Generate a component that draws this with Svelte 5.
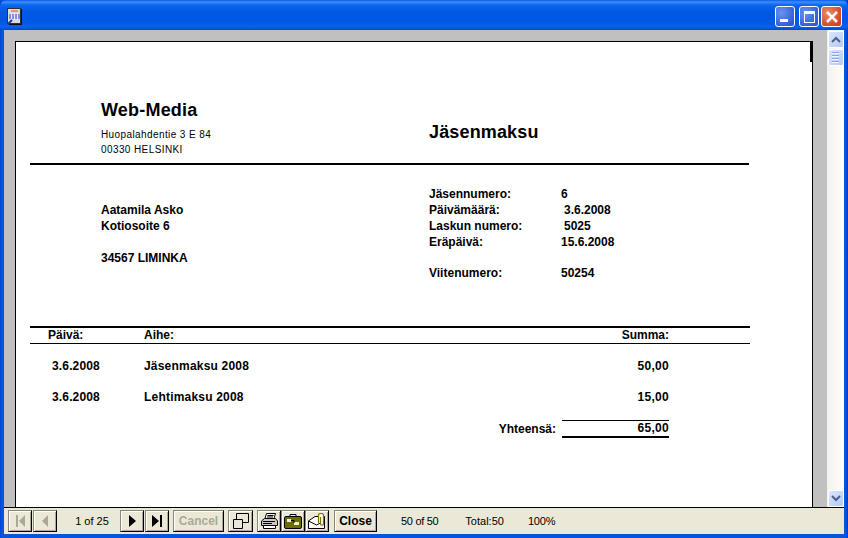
<script>
const rows = [
  { date: '3.6.2008', title: 'Jäsenmaksu 2008', sum: '50,00' },
  { date: '3.6.2008', title: 'Lehtimaksu 2008', sum: '15,00' }
]
const details = [
  ['Jäsennumero:', '6', false],
  ['Päivämäärä:', '3.6.2008', true],
  ['Laskun numero:', '5025', true],
  ['Eräpäivä:', '15.6.2008', false]
]
</script>

<div class="window">
  <div class="titlebar">
    <svg class="appicon" width="15" height="17" viewBox="0 0 15 17">
      <rect x="0.5" y="0.5" width="13" height="15" fill="#dcdcdc" stroke="#303030"/>
      <path d="M14.500 1v15.500H2" fill="none" stroke="#101010"/>
      <rect x="4" y="2" width="7" height="2" fill="#f08a8a"/>
      <path d="M2 6h11v5H2z" fill="#8a8ae8"/>
      <path d="M4.500 5v7M7.500 5v7M10.500 5v7" stroke="#e8e8ff"/>
      <path d="M1 16l4-4" stroke="#2030b0" stroke-width="2"/>
    </svg>
    <div class="controls">
      <div class="ctl minimize"><span class="min"></span></div>
      <div class="ctl"><span class="max"></span></div>
      <div class="ctl close">
        <svg width="14" height="14" viewBox="0 0 14 14"><path d="M2 2l10 10M12 2L2 12" stroke="#fff" stroke-width="2.6"/></svg>
      </div>
    </div>
  </div>

  <div class="client">
    <div class="viewer">
      <div class="canvas">
        <div class="page">
          <div class="corner"></div>
          <div class="report">
            <div class="head">
              <div class="company">
                <div class="brand">Web-Media</div>
                <div class="addr first">Huopalahdentie 3 E 84</div>
                <div class="addr">00330 HELSINKI</div>
              </div>
              <div class="doctitle">Jäsenmaksu</div>
            </div>
            <div class="thick"></div>

            <div class="info">
              <div class="customer">
                <div>Aatamila Asko</div>
                <div>Kotiosoite 6</div>
                <div class="city">34567 LIMINKA</div>
              </div>
              <div class="details">
                {#each details as [label, value, nudge]}
                  <div class="detail"><span>{label}</span><span class:nudge>{value}</span></div>
                {/each}
                <div class="detail ref"><span>Viitenumero:</span><span>50254</span></div>
              </div>
            </div>

            <div class="lines">
              <div class="tablehead">
                <span class="c-date">Päivä:</span>
                <span class="c-title">Aihe:</span>
                <span class="c-sum">Summa:</span>
              </div>
              {#each rows as row}
                <div class="row">
                  <span class="c-date in">{row.date}</span>
                  <span class="c-title">{row.title}</span>
                  <span class="c-sum">{row.sum}</span>
                </div>
              {/each}
              <div class="total">
                <span class="t-label">Yhteensä:</span>
                <span class="t-value">65,00</span>
              </div>
            </div>
          </div>
        </div>
      </div>
      <div class="scrollbar">
        <div class="sb-btn">
          <svg width="10" height="7" viewBox="0 0 10 7"><path d="M1 6l4-4 4 4" fill="none" stroke="#4d6185" stroke-width="2"/></svg>
        </div>
        <div class="sb-thumb"><i></i><i></i><i></i><i></i></div>
        <div class="sb-space"></div>
        <div class="sb-btn">
          <svg width="10" height="7" viewBox="0 0 10 7"><path d="M1 1l4 4 4-4" fill="none" stroke="#4d6185" stroke-width="2"/></svg>
        </div>
      </div>
    </div>

    <div class="toolbar">
      <div class="group">
        <button class="btn icon" aria-label="First">
          <svg width="14" height="14" viewBox="0 0 14 14"><path d="M3 1h2v12H3zM12 1v12L6 7z" fill="#aca899"/></svg>
        </button>
        <button class="btn icon" aria-label="Previous">
          <svg width="14" height="14" viewBox="0 0 14 14"><path d="M10 1v12L4 7z" fill="#aca899"/></svg>
        </button>
      </div>
      <span class="pageno">1 of 25</span>
      <div class="group">
        <button class="btn icon" aria-label="Next">
          <svg width="14" height="14" viewBox="0 0 14 14"><path d="M4 1v12l7-6z" fill="#000"/></svg>
        </button>
        <button class="btn icon" aria-label="Last">
          <svg width="14" height="14" viewBox="0 0 14 14"><path d="M2 1v12l7-6zM10 1h2v12h-2z" fill="#000"/></svg>
        </button>
      </div>
      <button class="btn text cancel">Cancel</button>
      <button class="btn icon tree" aria-label="Group tree">
        <svg width="16" height="16" viewBox="0 0 16 16"><path d="M3.500 .5h12v9H9.500M3.500 .5v6" fill="none" stroke="#000"/><path d="M.5 6.500h9v9h-9z" fill="none" stroke="#000"/></svg>
      </button>
      <div class="group print">
        <button class="btn icon" aria-label="Print">
          <svg width="17" height="16" viewBox="0 0 17 16">
            <path d="M5.500 .5h9l-1.500 5H4z" fill="#fff" stroke="#000"/>
            <path d="M3.500 5.500h11l2 2.500v4.500H.5V8z" fill="#c8c8c8" stroke="#000"/>
            <path d="M2.500 12.500h12v3h-12z" fill="#fff" stroke="#000"/>
            <path d="M6.500 2.500h6M6 4h6M2 8.500h12M2 10.500h9" stroke="#000"/>
            <path d="M12 10.500h3" stroke="#e8d820"/>
          </svg>
        </button>
        <button class="btn icon" aria-label="Export">
          <svg width="18" height="15" viewBox="0 0 18 15">
            <path d="M6 .5h6v3H6z" fill="none" stroke="#000"/>
            <rect x=".5" y="2.500" width="17" height="12" rx="1.500" fill="#6b6b00" stroke="#000"/>
            <path d="M3 5h4v3H3zM10 8h5v3h-5z" fill="#f0f0d0"/>
            <path d="M7 6.500h3V9" fill="none" stroke="#000"/>
          </svg>
        </button>
        <button class="btn icon" aria-label="Mail">
          <svg width="18" height="16" viewBox="0 0 18 16">
            <path d="M.5 8L7 3.500h9.500v12H.5z" fill="#fff" stroke="#000"/>
            <path d="M.5 8l8 4 8-4" fill="none" stroke="#000"/>
            <path d="M10.500 10V2c0-2 5-2 5 0v9c0 1.500-3 1.500-3 0V4" fill="#fff" stroke="#807000" stroke-width="1.200"/>
          </svg>
        </button>
      </div>
      <button class="btn text close-btn">Close</button>
      <div class="stats">
        <span class="s1">50 of 50</span>
        <span class="s2">Total:50</span>
        <span class="s3">100%</span>
      </div>
    </div>
  </div>
</div>

<style>
:global(body) {
  margin: 0;
  background: #0831d9;
}

.window {
  width: 848px;
  height: 538px;
  display: flex;
  flex-direction: column;
  overflow: hidden;
  font-family: "Liberation Sans", Arial, sans-serif;
  background: linear-gradient(90deg, #0046d5 0, #0855dd 2px, #0855dd 846px, #0831d9 100%);
}

.titlebar {
  height: 30px;
  flex: none;
  display: flex;
  align-items: center;
  justify-content: space-between;
  padding: 0 6px 0 7px;
  box-sizing: border-box;
  border-radius: 7px 7px 0 0;
  background: linear-gradient(180deg, #0a5be8 0, #3c8fff 2px, #0d66ee 5px, #0058e4 12px, #0257e6 22px, #0a62ec 27px, #0047cf 30px);
}

.appicon {
  margin-top: 2px;
}

.controls {
  display: flex;
  gap: 3px;
  margin-top: 3px;
}

.ctl {
  width: 20px;
  height: 21px;
  box-sizing: border-box;
  border: 1px solid #fff;
  border-radius: 3px;
  display: flex;
  align-items: center;
  justify-content: center;
  position: relative;
  background: radial-gradient(circle at 30% 30%, #6a93ee, #2a5bd8 80%);
}

.ctl.minimize {
  margin-right: 1px;
}

.ctl.close {
  width: 21px;
  margin-left: -1px;
  background: radial-gradient(circle at 30% 30%, #ea8a6c, #d2401c 80%);
}

.min {
  width: 8px;
  height: 3px;
  background: #fff;
  position: absolute;
  left: 4px;
  bottom: 4px;
}

.max {
  width: 9px;
  height: 8px;
  border: 1px solid #fff;
  border-top-width: 3px;
}

.client {
  flex: 1;
  margin: 0 4px 4px;
  min-height: 0;
  display: flex;
  flex-direction: column;
}

.viewer {
  flex: 1;
  min-height: 0;
  display: flex;
}

.canvas {
  flex: 1;
  background: #c0c0c0;
  padding: 11px 14px 0 11px;
  overflow: hidden;
}

.page {
  height: 100%;
  box-sizing: border-box;
  background: #fff;
  border: 1px solid #000;
  border-bottom: none;
  position: relative;
  padding-left: 14px;
  color: #000;
  font-size: 12px;
  font-weight: bold;
}

.corner {
  position: absolute;
  top: 0;
  right: -1px;
  width: 3px;
  height: 20px;
  background: #000;
}

.report {
  width: 719px;
}

.head {
  display: flex;
  padding: 58px 0 0 71px;
  height: 63px;
}

.company {
  width: 328px;
}

.brand {
  font-size: 18px;
  line-height: 20px;
  letter-spacing: 0.2px;
}

.addr {
  font-size: 10px;
  font-weight: normal;
  line-height: 15px;
  letter-spacing: 0.4px;
}

.addr.first {
  margin-top: 7px;
}

.doctitle {
  font-size: 18px;
  line-height: 20px;
  margin-top: 22px;
  letter-spacing: 0.15px;
}

.thick {
  height: 2px;
  background: #000;
}

.info {
  display: flex;
  padding-left: 71px;
  height: 161px;
}

.customer {
  width: 328px;
  padding-top: 37px;
  line-height: 16px;
}

.city {
  margin-top: 16px;
}

.details {
  padding-top: 21px;
  line-height: 16px;
}

.detail {
  display: grid;
  grid-template-columns: 132px auto;
}

.detail .nudge {
  padding-left: 3px;
}

.detail.ref {
  margin-top: 15px;
}

.lines {
  width: 720px;
}

.tablehead {
  display: flex;
  height: 15px;
  line-height: 15px;
  border-top: 2px solid #000;
  border-bottom: 1px solid #000;
  width: 720px;
}

.c-date {
  width: 114px;
  padding-left: 18px;
  box-sizing: border-box;
}

.c-date.in {
  padding-left: 22px;
  letter-spacing: 0.15px;
}

.c-title {
  width: 301px;
}

.c-sum {
  width: 224px;
  text-align: right;
}

.row {
  display: flex;
  height: 31px;
  line-height: 16px;
  padding-top: 14px;
  box-sizing: border-box;
}

.row .c-title {
  letter-spacing: 0.2px;
}

.row .c-sum {
  letter-spacing: 0.3px;
}

.total {
  display: flex;
  align-items: center;
  margin: 14px 0 0 60px;
}

.t-label {
  width: 472px;
  text-align: right;
  padding-right: 6px;
  box-sizing: border-box;
}

.t-value {
  width: 107px;
  height: 15px;
  line-height: 15px;
  text-align: right;
  letter-spacing: 0.3px;
  border-top: 1px solid #000;
  border-bottom: 2px solid #000;
}

.scrollbar {
  width: 17px;
  flex: none;
  display: flex;
  flex-direction: column;
  padding: 1px 0 0;
  box-sizing: border-box;
  background: linear-gradient(90deg, #f3f1ec, #fefefb);
}

.sb-btn, .sb-thumb {
  width: 14px;
  height: 15px;
  margin: 0 auto;
  border: 1px solid #fff;
  border-radius: 2px;
  display: flex;
  align-items: center;
  justify-content: center;
  background: linear-gradient(135deg, #dbe6fd, #b4c8f6);
}

.sb-thumb {
  flex-direction: column;
  gap: 1px;
  margin-top: 1px;
}

.sb-thumb i {
  display: block;
  width: 7px;
  height: 1px;
  background: #8ba5e4;
  border-bottom: 1px solid #eef3ff;
}

.sb-space {
  flex: 1;
}

.toolbar {
  height: 27px;
  flex: none;
  box-sizing: border-box;
  border-top: 1px solid #000;
  background: #ebe8d8;
  display: flex;
  align-items: center;
  padding-left: 4px;
  font-size: 12px;
  color: #000;
}

.group {
  display: flex;
  gap: 1px;
}

.btn {
  height: 22px;
  padding: 0;
  box-sizing: border-box;
  font-family: inherit;
  background: #ebe8d8;
  border: 1px solid;
  border-color: #8a8878 #000 #000 #8a8878;
  box-shadow: inset 1px 1px 0 #fff, inset -1px -1px 0 #aca899;
  display: flex;
  align-items: center;
  justify-content: center;
  font-size: 12px;
  font-weight: bold;
}

.btn.icon {
  width: 24px;
}

.btn.text {
  color: #000;
}

.pageno {
  width: 63px;
  padding-left: 7px;
  box-sizing: border-box;
  text-align: center;
  font-size: 11px;
}

.cancel {
  width: 51px;
  margin-left: 4px;
  color: #aca899 !important;
}

.btn.tree {
  width: 25px;
  margin-left: 4px;
}

.print {
  margin-left: 4px;
}

.print .btn + .btn {
  margin-left: -1px;
}

.close-btn {
  width: 43px;
  margin-left: 5px;
}

.stats {
  flex: 1;
  display: flex;
  font-size: 11px;
}

.s1 {
  margin-left: 24px;
  letter-spacing: -0.3px;
}

.s2 {
  margin-left: 27px;
}

.s3 {
  margin-left: 24px;
  letter-spacing: -0.2px;
}
</style>
